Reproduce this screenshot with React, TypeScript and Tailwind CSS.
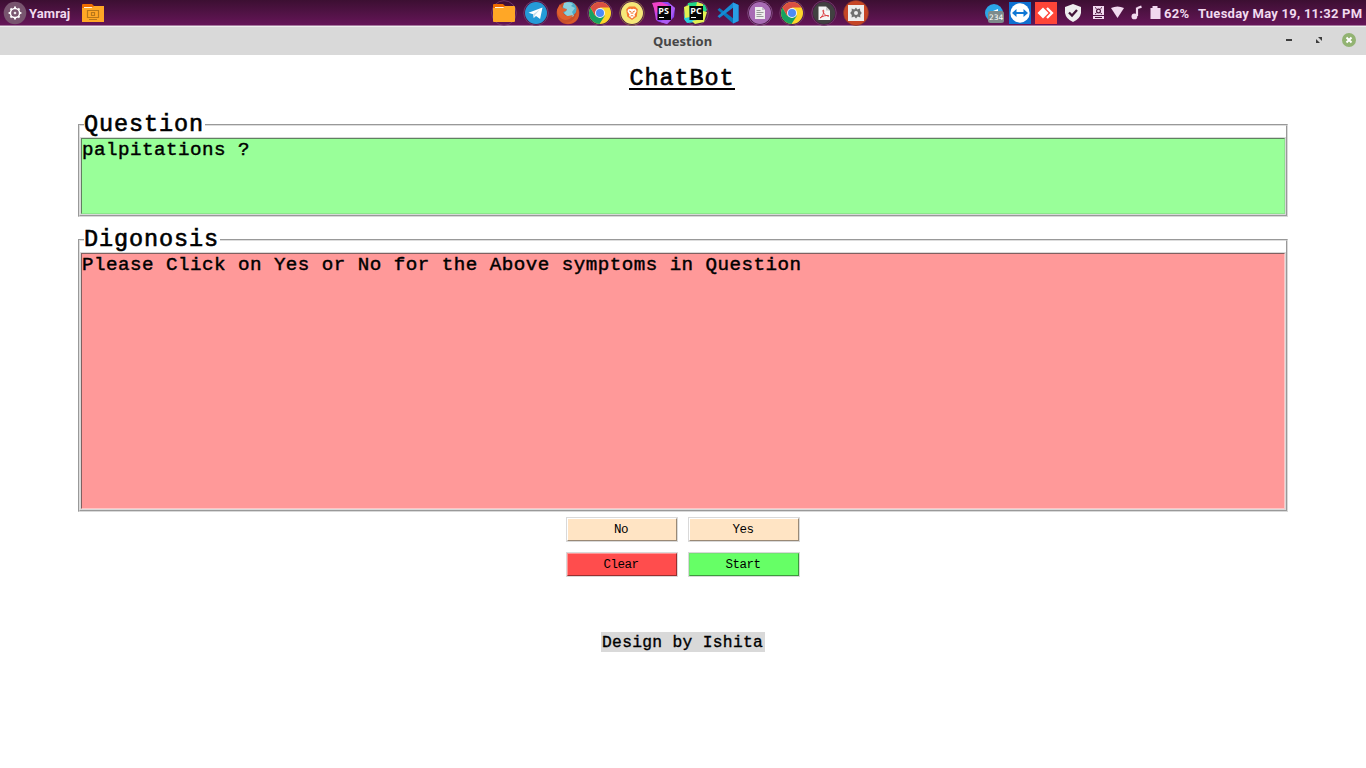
import React from "react";

const MONO = "font-['Liberation_Mono',monospace]";

function Icon({ children, w = 32 }: { children: React.ReactNode; w?: number }) {
  return (
    <svg width={w} height="26" viewBox={`0 0 ${w} 26`} className="block shrink-0 overflow-visible">
      {children}
    </svg>
  );
}

function Ring() {
  return <circle cx="16" cy="13" r="12.3" fill="#4d1846" stroke="#793f71" strokeWidth="0.8" />;
}

function Gear({ cx, cy, color, teeth = 8, r = 4.6 }: { cx: number; cy: number; color: string; teeth?: number; r?: number }) {
  return (
    <g fill="none" stroke={color}>
      <circle cx={cx} cy={cy} r={r} strokeWidth="1.5" />
      {Array.from({ length: teeth }, (_, i) => (
        <path
          key={i}
          d={`M${cx} ${cy - r}v-1.8`}
          strokeWidth="1.9"
          transform={`rotate(${(i * 360) / teeth} ${cx} ${cy})`}
        />
      ))}
      <circle cx={cx} cy={cy} r="1" fill={color} strokeWidth="0.6" />
    </g>
  );
}

function Chrome() {
  return (
    <Icon>
      <Ring />
      <circle cx="16" cy="13" r="11" fill="#fdd62c" />
      <path d="M6.5 7.5A11 11 0 0 0 15.5 24L20.8 15.8 16 13 11.2 15.7Z" fill="#18a160" />
      <path d="M6.5 7.5A11 11 0 0 1 25.5 7.5H16L11.2 15.7Z" fill="#d94f43" />
      <circle cx="16" cy="13" r="5" fill="#f4f4f4" />
      <circle cx="16" cy="13" r="4" fill="#4c8bf5" />
    </Icon>
  );
}

function Folder() {
  return (
    <Icon>
      <circle cx="16" cy="13" r="12.3" fill="none" stroke="#793f71" strokeWidth="0.8" />
      <path d="M5 5q0-1 1-1h9l2 2v4H5Z" fill="#ef6c00" />
      <path d="M7 7h9v1.4H7Z" fill="#fff3e0" />
      <path d="M5 8h10l2-2h9q1 0 1 1v14q0 1-1 1H6q-1 0-1-1Z" fill="#ffa726" />
      <path d="M7 7h8.7l-1 1H7Z" fill="#fff3e0" />
    </Icon>
  );
}

function Telegram() {
  return (
    <Icon>
      <Ring />
      <circle cx="16" cy="13" r="11" fill="#259bd8" />
      <path d="m8.5 12.8 14-5.4-2.4 11.6-4.1-3-2.2 2-.7-3.8Z" fill="#fff" />
      <path d="m13.1 14.2 6.8-4.6-5.1 5.6-1 2.8Z" fill="#c5dce9" />
    </Icon>
  );
}

function Firefox() {
  return (
    <Icon>
      <circle cx="16" cy="13" r="11.3" fill="#c8502a" />
      <circle cx="17.5" cy="9" r="7.2" fill="#4bacc9" />
      <path d="M12 3q5-2 9 1l-2 2 4 2-3 4 2 4-5 2-5-5 3-3-4-3Z" fill="#8bd0dd" />
      <path d="M5 10 8 4l2 4 5 1-1 2-3 1q1 4 5 4l5-1q-4 7-11 4-5-3-5-9Z" fill="#e0602f" />
      <path d="M25 8q4 8-1 13-5 4-11 2 8-1 10-6 2-4 2-9Z" fill="#d9592c" />
    </Icon>
  );
}

function Brave() {
  return (
    <Icon>
      <circle cx="16" cy="13" r="12.3" fill="#4d1846" stroke="#927047" strokeWidth="0.8" />
      <circle cx="16" cy="13" r="11" fill="#f5e779" />
      <path d="m13 6.5 6 0 2.8 2.7-1 7.3-4.8 3.5-4.8-3.5-1-7.3Z" fill="#f47a32" />
      <path d="m12 9.5 2.5-.7 1.5.5 1.5-.5 2.5.7.5 2-2 3 .5 1.5-3 2.5-3-2.5.5-1.5-2-3Z" fill="#fff" />
      <path d="m13 11 2 .7.3 2.3M19 11l-2 .7-.3 2.3M14.5 16.2l1.5-.7 1.5.7" fill="none" stroke="#f47a32" strokeWidth="0.9" />
    </Icon>
  );
}

function JetBrains({ label }: { label: "PS" | "PC" }) {
  const ps = label === "PS";
  return (
    <Icon>
      {ps ? (
        <g>
          <path d="m5 3 10-1-3 20-4-2Z" fill="#c445e8" />
          <path d="m15 2 5 0 7 6-1 9-7 7-10-3Z" fill="#8a48f5" />
          <path d="m4 3 8-1 9 3-13 8Z" fill="#ef42c6" />
          <path d="m22 4 5 4-4 12-4 4-7-2 10-7Z" fill="#ae5bf2" />
        </g>
      ) : (
        <g>
          <circle cx="16" cy="13" r="12.3" fill="#4d1846" stroke="#793f71" strokeWidth="0.8" />
          <path d="m8 3 9-1 8 3 2 5-8 9-14 2Z" fill="#21d789" />
          <path d="m5 9 8 8 4 5-10 1-3-4Z" fill="#28cddd" />
          <path d="m4 7 5-2 1 12-5 1ZM17 2l6 2v3h-7ZM23 11l4 1-3 10-9 2-3-3 9-2Z" fill="#e2f052" />
        </g>
      )}
      <path d="M9.5 6h13.5v14H9.5Z" fill="#050505" />
      <text x="10.3" y="13.5" className="font-['Open_Sans',sans-serif] text-[9px] font-bold" fill="#fff">{label}</text>
      <path d="M11 17.5h5" stroke="#fff" strokeWidth="1" />
    </Icon>
  );
}

function Code() {
  return (
    <Icon>
      <path d="m21 2.5 5.5 2.5v16L21 23.5 5.5 9.7l2-1.8L21 18.2Z" fill="#0878bd" />
      <path d="M21 2.5 5.5 16.3l2 1.8L21 7.8Z" fill="#168bd4" />
      <path d="m21 2.5 5.5 2.5v16L21 23.5Z" fill="#299fe5" />
    </Icon>
  );
}

function Editor() {
  return (
    <Icon>
      <circle cx="16" cy="13" r="12.3" fill="#4d1846" stroke="#8d578f" strokeWidth="0.8" />
      <circle cx="16" cy="13" r="11" fill="#a86cb5" />
      <path d="M11 7h7l3 3v9H11Z" fill="#ededed" />
      <path d="M18 7v3h3Z" fill="#c5bdc7" />
      <path d="M12.5 10.5h4M12.5 12.5h7M12.5 14.5h5M12.5 16.5h7" stroke="#9a9a9a" />
    </Icon>
  );
}

function Pdf() {
  return (
    <Icon>
      <circle cx="16" cy="13" r="12.3" fill="#4d1846" stroke="#793f71" strokeWidth="0.8" />
      <circle cx="16" cy="13" r="11" fill="#414141" />
      <path d="M10.5 6.5H18l4 4V20H10.5Z" fill="#f5f5f5" />
      <path d="M18 6.5v4h4Z" fill="#c7c7c7" />
      <path d="M12 18c4-3 4-7 3.4-8-.8-1.2-1.2 5.8 5.5 6-3.2-1.3-6.4.3-8.9 2Z" fill="none" stroke="#db3d42" />
    </Icon>
  );
}

function Settings() {
  return (
    <Icon>
      <circle cx="16" cy="13" r="12.5" fill="#c64526" stroke="#83352c" strokeWidth="0.6" />
      <path d="M8 5h16v16H8Z" fill="#ededed" />
      <path d="m16 7.5 1.3 2 2.7-1 .2 2.5 1.6 2-1.6 2 .2 2.5-2.7-1-1.7 2-1.7-2-2.7 1 .2-2.5-1.6-2 1.6-2-.2-2.5 2.7 1Z" fill="#707070" />
      <circle cx="16" cy="13" r="2" fill="#ededed" />
    </Icon>
  );
}

function Tray() {
  return (
    <svg width="180" height="26" viewBox="984 0 180 26" className="block shrink-0">
      <circle cx="994" cy="13" r="9" fill="#2ba5e7" />
      <path d="m988 13 10-4v6l-7 2Z" fill="#fff" />
      <rect x="988" y="11" width="16" height="12" rx="2.5" fill="#7d8b8b" />
      <text x="989" y="20" className="font-['DejaVu_Sans',sans-serif] text-[7.5px] font-normal" fill="#fff">234</text>
      <rect x="1009" y="2" width="22" height="22" fill="#0e70d1" />
      <circle cx="1020" cy="13" r="9.7" fill="#fff" />
      <path d="m1012 13 4.5-4v3h7V9l4.500 4-4.500 4v-3h-7v3Z" fill="#1078d5" />
      <rect x="1035" y="2" width="22" height="22" fill="#ff4538" />
      <path d="m1037.5 13 5.5-5.5 5.5 5.5-5.5 5.500Z" fill="#fff" />
      <path d="m1047 8 5 5-5 5" fill="none" stroke="#fff" strokeWidth="2.3" />
      <path d="m1073 4 8 3v6q-1 6-8 9-7-3-8-9V7Z" fill="#eee" />
      <path d="m1069 12.5 3 3 5-5.500" fill="none" stroke="#421639" strokeWidth="2.3" />
      <path d="M1093 6h11v9h-11ZM1093 16h11v3h-11Z" fill="#f1d9ef" />
      <circle cx="1098.5" cy="11" r="1.9" fill="none" stroke="#461239" strokeWidth="1.2" />
      <path d="m1095 7.5 1.500 1m5.500-1-1.500 1M1095 14l1.500-1m5.500 1-1.500-1M1095 17.500h7" stroke="#461239" />
      <path d="M1111 8q6.5-3 13 0l-6.5 10Z" fill="#f1d9ef" />
      <path d="M1137 7.5V16M1137.5 8l4-1.4" fill="none" stroke="#f1d9ef" strokeWidth="2.2" />
      <circle cx="1134.4" cy="16.4" r="2.9" fill="#f1d9ef" />
      <path d="M1152.5 6h5v2h3v11h-10V8h2Z" fill="#f1d9ef" />
    </svg>
  );
}

function Panel({ title, text, tall = false }: { title: string; text: string; tall?: boolean }) {
  return (
    <section className={`relative ml-[78px] w-[1210px] border border-[#d9d9d9] border-t-[#999] border-l-[#999] ${tall ? "h-[273px]" : "h-[93px]"}`}>
      <div className="flex h-full flex-col border border-t-[#ddd] border-r-[#999] border-b-[#999] border-l-[#ddd] pt-[11px]">
        <div className={`flex-1 border border-[#d9d9d9] ${tall ? "bg-[#ff9999]" : "bg-[#99ff99]"}`}>
          <div className={`h-full border pt-px ${tall ? "border-[#ffc5c5] border-t-[#806060] border-l-[#806060]" : "border-[#8ce68c] border-t-[#608060] border-l-[#608060]"}`}>
            <p className={`${MONO} whitespace-pre text-[19.2px] leading-[20px] tracking-[0.478px] [-webkit-text-stroke:0.45px_black]`}>{text}</p>
          </div>
        </div>
      </div>
      <h2 className={`${MONO} absolute -top-[11px] left-[5px] bg-white pr-px text-[23.5px] leading-[22px] tracking-[0.898px] [-webkit-text-stroke:0.6px_black]`}>{title}</h2>
    </section>
  );
}

function Button({ label, kind }: { label: string; kind: "plain" | "red" | "green" }) {
  const colors = {
    plain: "bg-[#ffe4c4] border-t-white border-l-white border-r-[#998976] border-b-[#998976]",
    red: "bg-[#ff4d4d] border-t-[#ff9494] border-l-[#ff9494] border-r-[#992e2e] border-b-[#992e2e]",
    green: "bg-[#66ff66] border-t-[#70e670] border-l-[#70e670] border-r-[#3d993d] border-b-[#3d993d]",
  }[kind];
  return (
    <button className="h-[25px] w-[112px] border border-[#d9d9d9]">
      <span className={`${MONO} flex h-full items-center justify-center border pt-[2px] pr-[2px] text-[12.5px] leading-none tracking-[-0.5px] ${colors}`}>{label}</span>
    </button>
  );
}

export default function App() {
  return (
    <main className="flex h-[768px] w-[1366px] flex-col overflow-hidden bg-white text-black">
      <header className="flex h-[26px] shrink-0 border-b border-[#a67b9f] bg-linear-to-b from-[#3c0f32] to-[#651558] font-['Roboto',sans-serif] text-[13px] font-bold leading-[27px] text-[#f1d9ef]">
        <Icon w={29}>
          <circle cx="15" cy="13" r="11.3" fill="#78556f" />
          <Gear cx={15} cy={13} color="#fff" />
        </Icon>
        <span className="w-[48px] tracking-[0.1px]">Yamraj</span>
        <div className="w-[411px]">
          <Icon>
            <path d="M5 5q0-1 1-1h9l2 2v4H5Z" fill="#ef6c00" />
            <path d="M5 8h10l2-2h10v16H5Z" fill="#ffa726" />
            <path d="M7 7h8.7l-1 1H7Z" fill="#fff3e0" />
            <path d="M10.5 10.500h11v7h-11ZM12 19.500h8M14.5 12.500h3v3h-3Z" fill="none" stroke="#b77719" strokeWidth="1.2" />
          </Icon>
        </div>
        <nav className="flex w-[496px]">
          <Folder /><Telegram /><Firefox /><Chrome /><Brave />
          <JetBrains label="PS" /><JetBrains label="PC" /><Code />
          <Editor /><Chrome /><Pdf /><Settings />
        </nav>
        <Tray />
        <span className="w-[34px] tracking-[0.25px]">62%</span>
        <span className="whitespace-nowrap tracking-[0.25px]">Tuesday May 19, 11:32 PM</span>
      </header>
      <div className="flex h-[29px] shrink-0 border-t border-[#eee] bg-[#d9d9d9]">
        <h1 className="flex-1 pl-[653px] font-['Noto_Sans',sans-serif] text-[13px] font-bold leading-[29px] text-[#474747]">Question</h1>
        <svg width="90" height="28" viewBox="1276 27 90 28">
          <path d="M1286 40h6" stroke="#3c3c3c" strokeWidth="2" />
          <path d="M1318 37h4v4ZM1316 39v4h4Z" fill="#3c3c3c" />
          <circle cx="1349" cy="40" r="7" fill="#92b372" />
          <path d="m1346.5 37.500 5 5m0-5-5 5" stroke="#fff" strokeWidth="2" />
        </svg>
      </div>
      <div className="flex h-[69px] shrink-0 justify-center pt-[12px] pr-[2px]">
        <h2 className={`${MONO} h-[23px] border-b-2 border-black text-[23.5px] leading-[23px] tracking-[0.898px] [-webkit-text-stroke:0.6px_black]`}>ChatBot</h2>
      </div>
      <Panel title="Question" text="palpitations ?" />
      <div className="h-[22px] shrink-0" />
      <Panel title="Digonosis" text="Please Click on Yes or No for the Above symptoms in Question" tall />
      <div className="mt-[5px] grid grid-cols-[112px_112px] justify-center gap-x-[10px] gap-y-[10px]">
        <Button label="No" kind="plain" />
        <Button label="Yes" kind="plain" />
        <Button label="Clear" kind="red" />
        <Button label="Start" kind="green" />
      </div>
      <footer className={`${MONO} mt-[55px] ml-[601px] h-[20px] w-[164px] bg-[#d9d9d9] pl-px text-[16.3px] leading-[21px] tracking-[0.3px] [-webkit-text-stroke:0.35px_black]`}>Design by Ishita</footer>
    </main>
  );
}
